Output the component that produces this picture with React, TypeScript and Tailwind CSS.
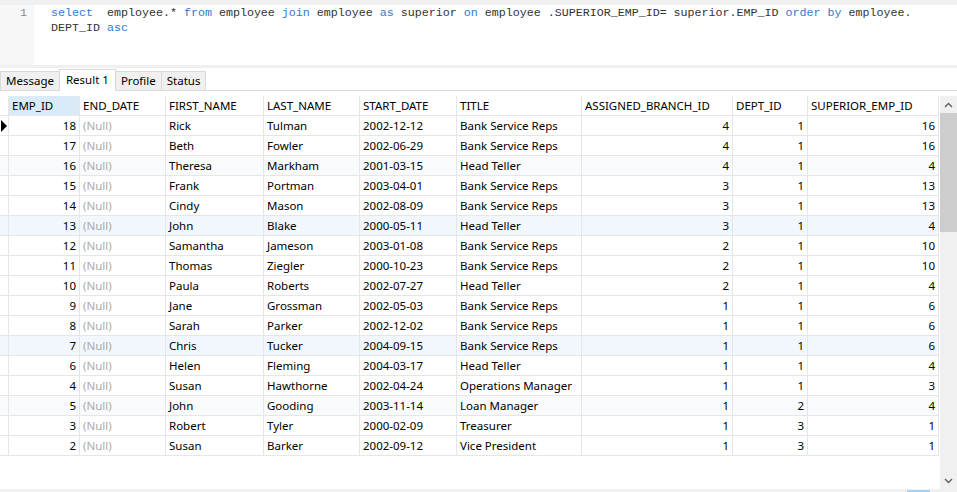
import React from "react";

type Row = [number, string, string, string, string, number, number, number];

const rows: Row[] = [
  [18, "Rick", "Tulman", "2002-12-12", "Bank Service Reps", 4, 1, 16],
  [17, "Beth", "Fowler", "2002-06-29", "Bank Service Reps", 4, 1, 16],
  [16, "Theresa", "Markham", "2001-03-15", "Head Teller", 4, 1, 4],
  [15, "Frank", "Portman", "2003-04-01", "Bank Service Reps", 3, 1, 13],
  [14, "Cindy", "Mason", "2002-08-09", "Bank Service Reps", 3, 1, 13],
  [13, "John", "Blake", "2000-05-11", "Head Teller", 3, 1, 4],
  [12, "Samantha", "Jameson", "2003-01-08", "Bank Service Reps", 2, 1, 10],
  [11, "Thomas", "Ziegler", "2000-10-23", "Bank Service Reps", 2, 1, 10],
  [10, "Paula", "Roberts", "2002-07-27", "Head Teller", 2, 1, 4],
  [9, "Jane", "Grossman", "2002-05-03", "Bank Service Reps", 1, 1, 6],
  [8, "Sarah", "Parker", "2002-12-02", "Bank Service Reps", 1, 1, 6],
  [7, "Chris", "Tucker", "2004-09-15", "Bank Service Reps", 1, 1, 6],
  [6, "Helen", "Fleming", "2004-03-17", "Head Teller", 1, 1, 4],
  [4, "Susan", "Hawthorne", "2002-04-24", "Operations Manager", 1, 1, 3],
  [5, "John", "Gooding", "2003-11-14", "Loan Manager", 1, 2, 4],
  [3, "Robert", "Tyler", "2000-02-09", "Treasurer", 1, 3, 1],
  [2, "Susan", "Barker", "2002-09-12", "Vice President", 1, 3, 1],
];

const headers = [
  "EMP_ID",
  "END_DATE",
  "FIRST_NAME",
  "LAST_NAME",
  "START_DATE",
  "TITLE",
  "ASSIGNED_BRANCH_ID",
  "DEPT_ID",
  "SUPERIOR_EMP_ID",
];

const cols = "grid grid-cols-[9px_71px_86px_98px_96px_97px_125px_151px_75px_131px]";
const cell = "h-5 border-r border-b border-[#e6e6e6] px-[3px] leading-[19px] whitespace-nowrap overflow-hidden";

const tint = (i: number) => {
  if (i === 5 || i === 11) return "bg-[#f1f7fd]";
  if (i === 2 || i === 14) return "bg-[#f8fafc]";
  return "bg-white";
};

function Kw({ children }: { children: React.ReactNode }) {
  return <span className="text-[#2f7bd0]">{children}</span>;
}

function Editor() {
  return (
    <div className="flex h-[65px] border-t-[5px] border-[#f0f0f0] bg-white">
      <div className="w-[34px] shrink-0 bg-[#f7f7f7] pr-[7px] pt-[1px] text-right text-[#8a8a8a] leading-[15px]">
        1
      </div>
      <div className="pl-[17px] pt-[1px] leading-[15px] text-[#333]">
        <div className="whitespace-pre">
          <Kw>select</Kw>  employee.* <Kw>from</Kw> employee <Kw>join</Kw> employee <Kw>as</Kw> superior{" "}
          <Kw>on</Kw> employee .SUPERIOR_EMP_ID= superior.EMP_ID <Kw>order</Kw> <Kw>by</Kw> employee.
        </div>
        <div className="whitespace-pre">
          DEPT_ID <Kw>asc</Kw>
        </div>
      </div>
    </div>
  );
}

function Tabs() {
  const tab = "h-[19px] border border-b-0 border-[#d9d9d9] bg-[#f0f0f0] px-[5px] leading-[18px] text-black";
  return (
    <div className="flex h-[23px] items-end border-b border-[#d9d9d9] bg-white">
      <div className={tab}>Message</div>
      <div className="h-[22px] border border-b-0 border-[#d9d9d9] bg-white px-[6px] leading-[20px] text-black -ml-px -mb-px">
        Result 1
      </div>
      <div className={tab + " -ml-px"}>Profile</div>
      <div className={tab + " -ml-px"}>Status</div>
    </div>
  );
}

function Chevron({ up }: { up?: boolean }) {
  return (
    <svg width="9" height="6" viewBox="0 0 9 6" className="block">
      <path
        d={up ? "M1 5 L4.5 1.5 L8 5" : "M1 1 L4.5 4.5 L8 1"}
        fill="none"
        stroke="#606060"
        strokeWidth="1.4"
      />
    </svg>
  );
}

function Grid() {
  return (
    <div className="flex h-[393px] bg-white">
      <div className="w-[940px] overflow-hidden">
        <div className={cols}>
          <div className={cell + " border-[#e6e6e6]"} />
          {headers.map((h, i) => (
            <div key={h} className={cell + (i === 0 ? " bg-[#d9ebf9]" : "")}>
              {h}
            </div>
          ))}
          {rows.map((r, i) => {
            const bg = tint(i);
            return (
              <React.Fragment key={r[0]}>
                <div className={cell + " relative px-0 " + bg}>
                  {i === 0 && (
                    <svg width="7" height="12" viewBox="0 0 7 12" className="absolute left-[1px] top-[4px]">
                      <path d="M0 0 L6 6 L0 12 Z" fill="#000" />
                    </svg>
                  )}
                </div>
                <div className={cell + " text-right " + bg}>{r[0]}</div>
                <div className={cell + " text-[#aaaaaa] " + bg}>(Null)</div>
                <div className={cell + " " + bg}>{r[1]}</div>
                <div className={cell + " " + bg}>{r[2]}</div>
                <div className={cell + " " + bg}>{r[3]}</div>
                <div className={cell + " " + bg}>{r[4]}</div>
                <div className={cell + " text-right " + bg}>{r[5]}</div>
                <div className={cell + " text-right " + bg}>{r[6]}</div>
                <div className={cell + " text-right " + bg}>{r[7]}</div>
              </React.Fragment>
            );
          })}
        </div>
      </div>
      <div className="flex w-[17px] flex-col bg-[#f0f0f0]">
        <div className="flex h-[17px] items-center justify-center">
          <Chevron up />
        </div>
        <div className="mx-0 h-[119px] bg-[#cdcdcd]" />
        <div className="flex-1" />
        <div className="flex h-[17px] items-center justify-center">
          <Chevron />
        </div>
      </div>
    </div>
  );
}

export default function App() {
  return (
    <div className="h-[492px] w-[957px] overflow-hidden bg-white font-['Noto_Sans',sans-serif] text-[11.5px] text-black">
      <div className="font-['Liberation_Mono',monospace] text-[11.67px]">
        <Editor />
      </div>
      <div className="h-[3px] bg-[#f0f0f0]" />
      <Tabs />
      <div className="h-[5px] bg-white" />
      <Grid />
      <div className="flex h-[17px] bg-[#f0f0f0]">
        <div className="ml-[907px] mt-[1px] h-[3px] w-[23px] bg-[#a6cff0]" />
      </div>
    </div>
  );
}
